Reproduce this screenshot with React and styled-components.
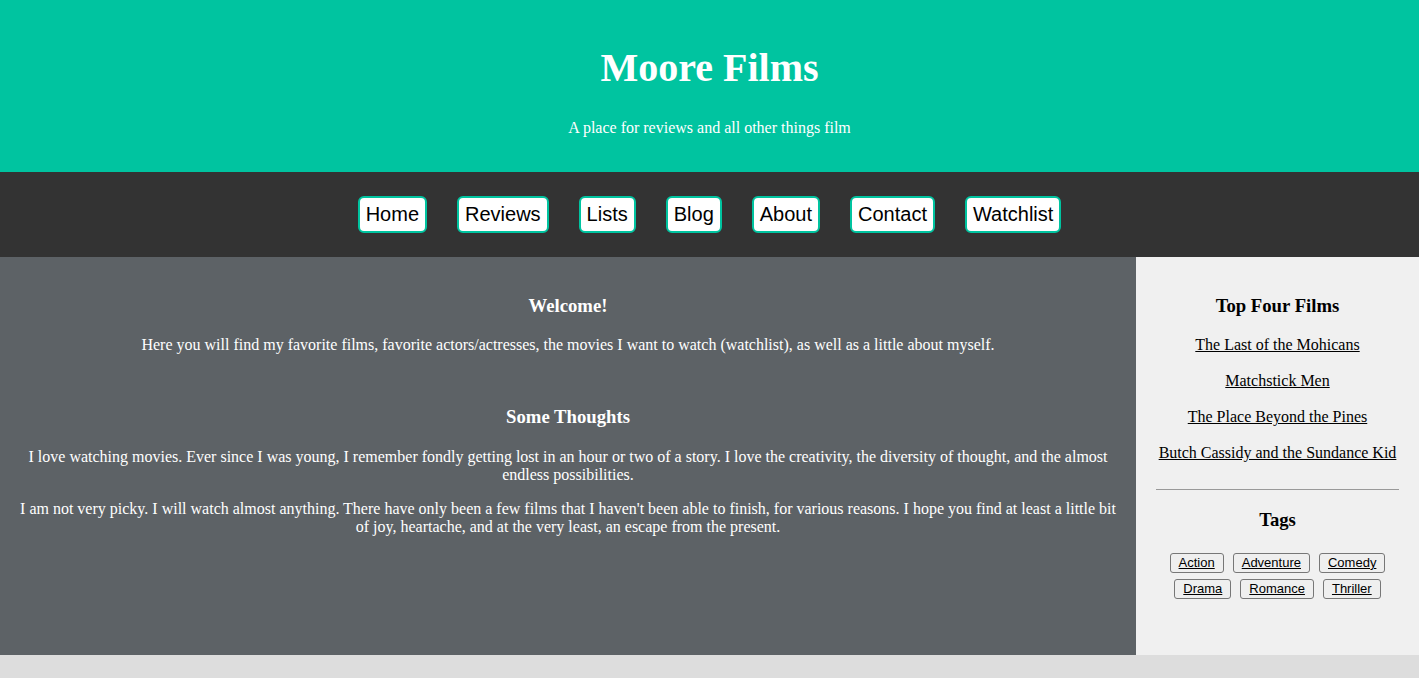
import React from "react"
import styled, { createGlobalStyle } from "styled-components"

const GlobalStyle = createGlobalStyle`
  body {
    margin: 0;
    background: #dddddd;
    font-family: "Liberation Serif", "Times New Roman", serif;
    font-size: 16px;
  }
`

const navItems = ["Home", "Reviews", "Lists", "Blog", "About", "Contact", "Watchlist"]

const films = [
  "The Last of the Mohicans",
  "Matchstick Men",
  "The Place Beyond the Pines",
  "Butch Cassidy and the Sundance Kid",
]

const tags = ["Action", "Adventure", "Comedy", "Drama", "Romance", "Thriller"]

const App = () => {
  return (
    <>
      <GlobalStyle />
      <Header>
        <Title>Moore Films</Title>
        <Tagline>A place for reviews and all other things film</Tagline>
      </Header>
      <Nav>
        {navItems.map(item => (
          <NavButton key={item} href="#">
            {item}
          </NavButton>
        ))}
      </Nav>
      <Layout>
        <Main>
          <Section>
            <Heading>Welcome!</Heading>
            <Text>
              Here you will find my favorite films, favorite actors/actresses,
              the movies I want to watch (watchlist), as well as a little about
              myself.
            </Text>
          </Section>
          <Section>
            <Heading>Some Thoughts</Heading>
            <Text>
              I love watching movies. Ever since I was young, I remember fondly
              getting lost in an hour or two of a story. I love the creativity,
              the diversity of thought, and the almost endless possibilities.
            </Text>
            <Text>
              I am not very picky. I will watch almost anything. There have only
              been a few films that I haven't been able to finish, for various
              reasons. I hope you find at least a little bit of joy, heartache,
              and at the very least, an escape from the present.
            </Text>
          </Section>
        </Main>
        <Sidebar>
          <Heading>Top Four Films</Heading>
          {films.map(film => (
            <FilmLink key={film}>
              <a href="#">{film}</a>
            </FilmLink>
          ))}
          <Divider />
          <Heading>Tags</Heading>
          <TagList>
            {tags.map(tag => (
              <Tag key={tag} href="#">
                {tag}
              </Tag>
            ))}
          </TagList>
        </Sidebar>
      </Layout>
    </>
  )
}

const Header = styled.header`
  background: #00c4a0;
  color: #fff;
  text-align: center;
  padding: 18px 0 19px;
`

const Title = styled.h1`
  font-size: 40px;
  margin: 26px 0 28px;
`

const Tagline = styled.p`
  margin: 16px 0;
`

const Nav = styled.nav`
  background: #333333;
  display: flex;
  justify-content: center;
  gap: 30px;
  padding: 24px 0;
`

const NavButton = styled.a`
  display: block;
  background: #fff;
  color: #000;
  text-decoration: none;
  font-family: "Liberation Sans", Arial, sans-serif;
  font-size: 20px;
  line-height: 23px;
  padding: 5px 6px;
  border: 2px solid #00c4a0;
  border-radius: 6px;
`

const Layout = styled.div`
  display: flex;
  min-height: 398px;
`

const Main = styled.main`
  flex: 0 0 1136px;
  background: #5d6266;
  color: #fff;
  text-align: center;
  padding: 19px 20px;
  box-sizing: border-box;
`

const Section = styled.section`
  & + & {
    margin-top: 52px;
  }
`

const Heading = styled.h3`
  font-size: 18.72px;
  margin: 18.72px 0 19.5px;
`

const Text = styled.p`
  margin: 16px 0;
  line-height: 18px;
`

const Sidebar = styled.aside`
  flex: 1;
  background: #f0f0f0;
  color: #000;
  text-align: center;
  padding: 19px 20px;
  box-sizing: border-box;
`

const FilmLink = styled.p`
  margin: 18px 0;
  line-height: 18px;

  a {
    color: #000;
  }
`

const Divider = styled.hr`
  border: none;
  border-top: 1px solid #999;
  margin: 27px 0 0;
`

const TagList = styled.div`
  display: flex;
  flex-wrap: wrap;
  justify-content: center;
  gap: 6px 9px;
  padding: 0 10px;
  margin-top: 22px;
`

const Tag = styled.a`
  display: block;
  font-family: "Liberation Sans", Arial, sans-serif;
  font-size: 13px;
  line-height: 16px;
  color: #000;
  text-decoration: underline;
  padding: 1px 8px;
  border: 1px solid #777;
  border-radius: 3px;
  background: #efefef;
`

export default App
